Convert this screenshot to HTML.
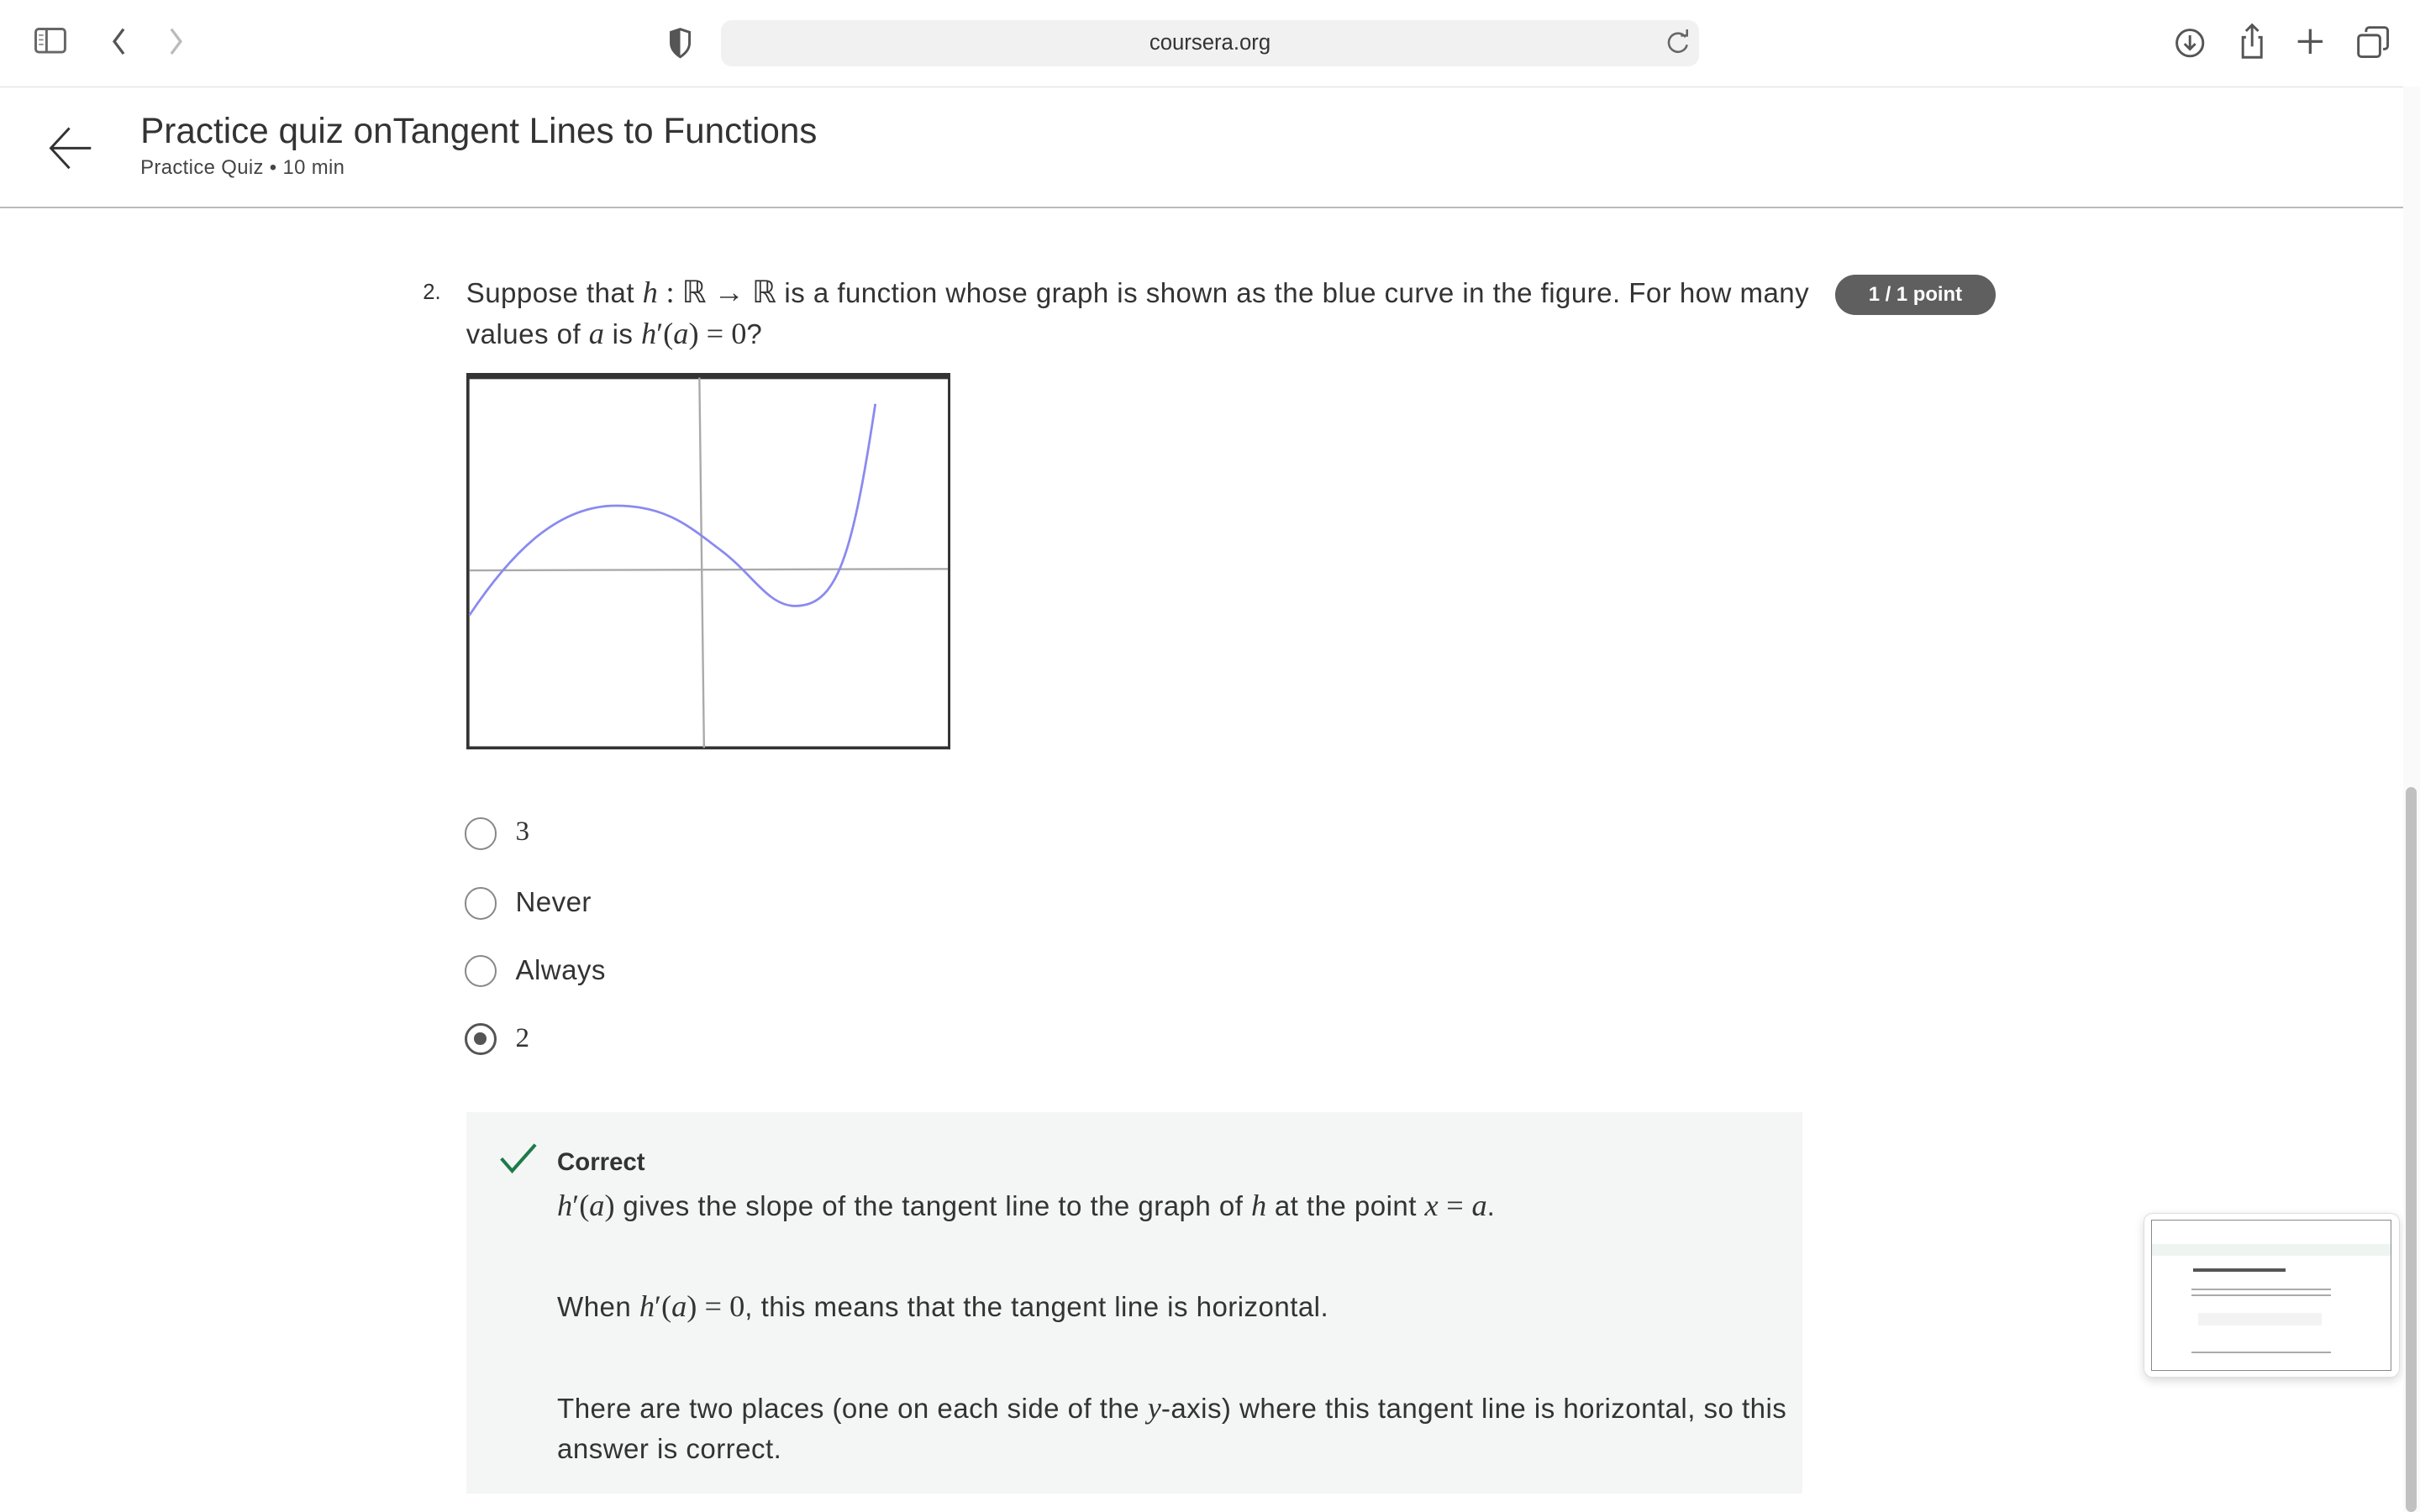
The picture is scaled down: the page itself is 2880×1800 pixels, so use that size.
<!DOCTYPE html>
<html><head><meta charset="utf-8"><style>
html{zoom:1.83673}
body{margin:0;width:1568px;height:980px;overflow:hidden;background:#fff;font-family:"Liberation Sans",sans-serif;color:#1f1f1f;position:relative}
.abs{position:absolute}
.m{font-family:"Liberation Serif",serif;font-style:italic;font-size:1.1em;letter-spacing:0}
.r{font-family:"Liberation Serif",serif;font-size:1.1em;letter-spacing:0}
.t{letter-spacing:0.25px}
.radio{position:absolute;left:301px;width:21px;height:21px;border:1.5px solid #888;border-radius:50%;box-sizing:border-box}
.opt{position:absolute;left:334px;font-size:18px;color:#333;letter-spacing:0.25px}
</style></head><body>
<div class="abs" style="left:0;top:0;width:1568px;height:56px;background:#fff;border-bottom:1px solid #ddd"></div>
<svg class="abs" style="left:20px;top:16px" width="26" height="22" viewBox="0 0 26 22"><rect x="3" y="3" width="19" height="15" rx="2" fill="none" stroke="#666" stroke-width="1.6"/><line x1="10" y1="3" x2="10" y2="18" stroke="#666" stroke-width="1.6"/><path d="M5 7h3M5 10h3M5 13h3" stroke="#888"/></svg>
<svg class="abs" style="left:68px;top:17px" width="20" height="20"><path d="M12 2L6 10l6 8" fill="none" stroke="#555" stroke-width="1.8"/></svg>
<svg class="abs" style="left:104px;top:17px" width="20" height="20"><path d="M7 2l6 8-6 8" fill="none" stroke="#bbb" stroke-width="1.8"/></svg>
<svg class="abs" style="left:432px;top:17px" width="18" height="22"><path d="M9 2L3 4v7c0 4 3 7 6 9 3-2 6-5 6-9V4z" fill="none" stroke="#555" stroke-width="1.6"/><path d="M9 2L3 4v7c0 4 3 7 6 9z" fill="#555"/></svg>
<div class="abs" style="left:467px;top:13px;width:634px;height:30px;background:#f1f1f1;border-radius:7px;text-align:center;line-height:30px;font-size:14px;color:#333">coursera.org</div>
<svg class="abs" style="left:1079px;top:19px" width="18" height="18"><path d="M13 5a6 6 0 1 0 1 5" fill="none" stroke="#666" stroke-width="1.4"/><path d="M10 4h4V0" fill="none" stroke="#666" stroke-width="1.4"/></svg>
<svg class="abs" style="left:1408px;top:17px" width="22" height="22"><circle cx="11" cy="11" r="8.5" fill="none" stroke="#555" stroke-width="1.6"/><path d="M11 6v9M7.5 11.5l3.5 3.5 3.5-3.5" fill="none" stroke="#555" stroke-width="1.6"/></svg>
<svg class="abs" style="left:1448px;top:14px" width="22" height="26"><path d="M7 10H5v13h12V10h-2M11 2v14M7 6l4-4 4 4" fill="none" stroke="#555" stroke-width="1.6"/></svg>
<svg class="abs" style="left:1487px;top:17px" width="20" height="20"><path d="M10 2v16M2 10h16" stroke="#555" stroke-width="1.8"/></svg>
<svg class="abs" style="left:1526px;top:16px" width="24" height="24"><rect x="2" y="7" width="14" height="14" rx="2" fill="none" stroke="#555" stroke-width="1.6"/><path d="M7 5V4a2 2 0 0 1 2-2h10a2 2 0 0 1 2 2v10a2 2 0 0 1-2 2h-1" fill="none" stroke="#555" stroke-width="1.6"/></svg>
<svg class="abs" style="left:30px;top:80px" width="32" height="32"><path d="M29 16H3M15 3L3 16l12 13" fill="none" stroke="#333" stroke-width="1.6"/></svg>
<div class="abs" style="left:91px;top:72px;font-size:23px;color:#333">Practice quiz onTangent Lines to Functions</div>
<div class="abs" style="left:91px;top:101px;font-size:13px;color:#444;letter-spacing:0.2px">Practice Quiz • 10 min</div>
<div class="abs" style="left:0;top:134px;width:1568px;height:1px;background:#bbb"></div>
<div class="abs" style="left:274px;top:182px;font-size:14px;color:#333">2.</div>
<div class="abs t" style="left:302px;top:177px;width:880px;font-size:18px;line-height:26px;color:#333">Suppose that <span class="m">h</span> <span class="r">: ℝ → ℝ</span> is a function whose graph is shown as the blue curve in the figure. For how many values of <span class="m">a</span> is <span class="m">h</span><span class="r">′(</span><span class="m">a</span><span class="r">) = 0</span>?</div>
<div class="abs" style="left:1189px;top:178px;width:104px;height:26px;border-radius:13px;background:#5f5f5f;color:#fff;font-size:13px;font-weight:bold;text-align:center;line-height:26px">1 / 1 point</div>
<svg class="abs" style="left:302px;top:242px" width="314" height="245" viewBox="0 0 314 245">
<rect x="1" y="2" width="312" height="241" fill="#fff" stroke="#333" stroke-width="2"/>
<rect x="0" y="0" width="314" height="4" fill="#333"/>
<line x1="2" y1="128" x2="312" y2="127" stroke="#aaa" stroke-width="1.3"/>
<line x1="151" y1="3" x2="154" y2="243" stroke="#aaa" stroke-width="1.3"/>
<path d="M2 157C30 115 60 86 97 86C130 86 145 100 165 115C185 130 195 150 212 151C240 152 250 120 265 20" fill="none" stroke="#8a8af0" stroke-width="1.5"/>
</svg>
<div class="radio" style="top:530px"></div><div class="opt r" style="top:529px">3</div>
<div class="radio" style="top:575px"></div><div class="opt" style="top:575px">Never</div>
<div class="radio" style="top:619px"></div><div class="opt" style="top:619px">Always</div>
<div class="radio" style="top:663px;border:2px solid #555"><div style="position:absolute;left:4.5px;top:4.5px;width:8px;height:8px;border-radius:50%;background:#555"></div></div><div class="opt r" style="top:663px">2</div>
<div class="abs" style="left:302px;top:721px;width:866px;height:247px;background:#f4f6f5"></div>
<svg class="abs" style="left:323px;top:740px" width="26" height="22"><path d="M2 11l7 8L24 2" fill="none" stroke="#1e7a4a" stroke-width="2.2"/></svg>
<div class="abs" style="left:361px;top:744px;font-size:16px;font-weight:bold;color:#333">Correct</div>
<div class="abs t" style="left:361px;top:770px;font-size:18px;color:#333"><span class="m">h</span><span class="r">′(</span><span class="m">a</span><span class="r">)</span> gives the slope of the tangent line to the graph of <span class="m">h</span> at the point <span class="m">x</span> <span class="r">=</span> <span class="m">a</span>.</div>
<div class="abs t" style="left:361px;top:835px;font-size:18px;color:#333">When <span class="m">h</span><span class="r">′(</span><span class="m">a</span><span class="r">) = 0</span>, this means that the tangent line is horizontal.</div>
<div class="abs t" style="left:361px;top:900px;width:800px;font-size:18px;line-height:26px;color:#333">There are two places (one on each side of the <span class="m">y</span>-axis) where this tangent line is horizontal, so this answer is correct.</div>
<div class="abs" style="left:1389px;top:786px;width:165px;height:106px;background:#fff;border:1px solid #ddd;border-radius:6px;box-shadow:0 2px 6px rgba(0,0,0,.15)">
<div style="position:absolute;left:4px;top:4px;width:155px;height:97px;border:1px solid #888;background:#fff">
<div style="position:absolute;left:0;top:15px;width:155px;height:8px;background:#eef5f0"></div>
<div style="position:absolute;left:27px;top:31px;width:60px;height:2px;background:#555"></div>
<div style="position:absolute;left:26px;top:44px;width:90px;height:1px;background:#aaa"></div>
<div style="position:absolute;left:26px;top:48px;width:90px;height:1px;background:#aaa"></div>
<div style="position:absolute;left:30px;top:60px;width:80px;height:8px;background:#f3f3f3"></div>
<div style="position:absolute;left:26px;top:85px;width:90px;height:1px;background:#aaa"></div>
</div></div>
<div class="abs" style="left:1557px;top:56px;width:11px;height:924px;background:#fafafa"></div>
<div class="abs" style="left:1559px;top:510px;width:7px;height:470px;background:#c1c1c1;border-radius:4px"></div>
</body></html>
